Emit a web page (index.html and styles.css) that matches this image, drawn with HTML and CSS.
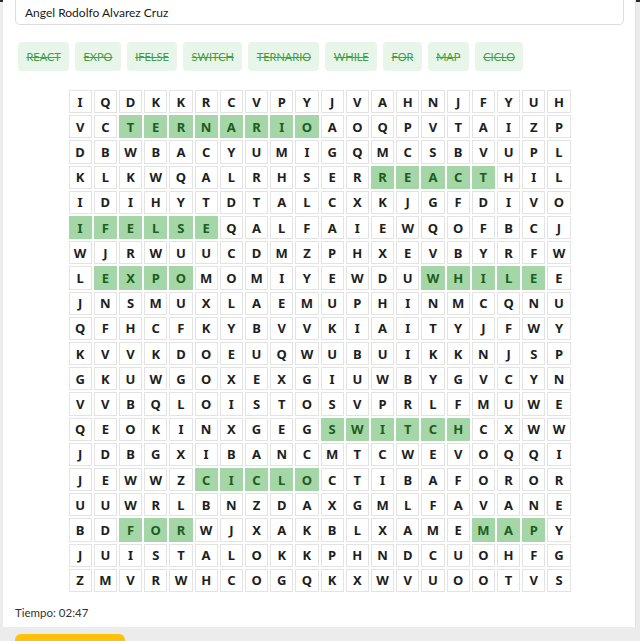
FILE: index.html
```html
<!DOCTYPE html>
<html lang="es">
<head>
<meta charset="utf-8">
<title>Sopa de letras</title>
<link rel="stylesheet" href="styles.css">
</head>
<body>
<div class="topbar"></div>
<div class="page">
  <div class="name-input">Angel Rodolfo Alvarez Cruz</div>
  <div class="words">
    <span class="chip">REACT</span>
    <span class="chip">EXPO</span>
    <span class="chip">IFELSE</span>
    <span class="chip">SWITCH</span>
    <span class="chip">TERNARIO</span>
    <span class="chip">WHILE</span>
    <span class="chip">FOR</span>
    <span class="chip">MAP</span>
    <span class="chip">CICLO</span>
  </div>
  <div class="board">
<span>I</span><span>Q</span><span>D</span><span>K</span><span>K</span><span>R</span><span>C</span><span>V</span><span>P</span><span>Y</span><span>J</span><span>V</span><span>A</span><span>H</span><span>N</span><span>J</span><span>F</span><span>Y</span><span>U</span><span>H</span>
<span>V</span><span>C</span><span class="f">T</span><span class="f">E</span><span class="f">R</span><span class="f">N</span><span class="f">A</span><span class="f">R</span><span class="f">I</span><span class="f">O</span><span>A</span><span>O</span><span>Q</span><span>P</span><span>V</span><span>T</span><span>A</span><span>I</span><span>Z</span><span>P</span>
<span>D</span><span>B</span><span>W</span><span>B</span><span>A</span><span>C</span><span>Y</span><span>U</span><span>M</span><span>I</span><span>G</span><span>Q</span><span>M</span><span>C</span><span>S</span><span>B</span><span>V</span><span>U</span><span>P</span><span>L</span>
<span>K</span><span>L</span><span>K</span><span>W</span><span>Q</span><span>A</span><span>L</span><span>R</span><span>H</span><span>S</span><span>E</span><span>R</span><span class="f">R</span><span class="f">E</span><span class="f">A</span><span class="f">C</span><span class="f">T</span><span>H</span><span>I</span><span>L</span>
<span>I</span><span>D</span><span>I</span><span>H</span><span>Y</span><span>T</span><span>D</span><span>T</span><span>A</span><span>L</span><span>C</span><span>X</span><span>K</span><span>J</span><span>G</span><span>F</span><span>D</span><span>I</span><span>V</span><span>O</span>
<span class="f">I</span><span class="f">F</span><span class="f">E</span><span class="f">L</span><span class="f">S</span><span class="f">E</span><span>Q</span><span>A</span><span>L</span><span>F</span><span>A</span><span>I</span><span>E</span><span>W</span><span>Q</span><span>O</span><span>F</span><span>B</span><span>C</span><span>J</span>
<span>W</span><span>J</span><span>R</span><span>W</span><span>U</span><span>U</span><span>C</span><span>D</span><span>M</span><span>Z</span><span>P</span><span>H</span><span>X</span><span>E</span><span>V</span><span>B</span><span>Y</span><span>R</span><span>F</span><span>W</span>
<span>L</span><span class="f">E</span><span class="f">X</span><span class="f">P</span><span class="f">O</span><span>M</span><span>O</span><span>M</span><span>I</span><span>Y</span><span>E</span><span>W</span><span>D</span><span>U</span><span class="f">W</span><span class="f">H</span><span class="f">I</span><span class="f">L</span><span class="f">E</span><span>E</span>
<span>J</span><span>N</span><span>S</span><span>M</span><span>U</span><span>X</span><span>L</span><span>A</span><span>E</span><span>M</span><span>U</span><span>P</span><span>H</span><span>I</span><span>N</span><span>M</span><span>C</span><span>Q</span><span>N</span><span>U</span>
<span>Q</span><span>F</span><span>H</span><span>C</span><span>F</span><span>K</span><span>Y</span><span>B</span><span>V</span><span>V</span><span>K</span><span>I</span><span>A</span><span>I</span><span>T</span><span>Y</span><span>J</span><span>F</span><span>W</span><span>Y</span>
<span>K</span><span>V</span><span>V</span><span>K</span><span>D</span><span>O</span><span>E</span><span>U</span><span>Q</span><span>W</span><span>U</span><span>B</span><span>U</span><span>I</span><span>K</span><span>K</span><span>N</span><span>J</span><span>S</span><span>P</span>
<span>G</span><span>K</span><span>U</span><span>W</span><span>G</span><span>O</span><span>X</span><span>E</span><span>X</span><span>G</span><span>I</span><span>U</span><span>W</span><span>B</span><span>Y</span><span>G</span><span>V</span><span>C</span><span>Y</span><span>N</span>
<span>V</span><span>V</span><span>B</span><span>Q</span><span>L</span><span>O</span><span>I</span><span>S</span><span>T</span><span>O</span><span>S</span><span>V</span><span>P</span><span>R</span><span>L</span><span>F</span><span>M</span><span>U</span><span>W</span><span>E</span>
<span>Q</span><span>E</span><span>O</span><span>K</span><span>I</span><span>N</span><span>X</span><span>G</span><span>E</span><span>G</span><span class="f">S</span><span class="f">W</span><span class="f">I</span><span class="f">T</span><span class="f">C</span><span class="f">H</span><span>C</span><span>X</span><span>W</span><span>W</span>
<span>J</span><span>D</span><span>B</span><span>G</span><span>X</span><span>I</span><span>B</span><span>A</span><span>N</span><span>C</span><span>M</span><span>T</span><span>C</span><span>W</span><span>E</span><span>V</span><span>O</span><span>Q</span><span>Q</span><span>I</span>
<span>J</span><span>E</span><span>W</span><span>W</span><span>Z</span><span class="f">C</span><span class="f">I</span><span class="f">C</span><span class="f">L</span><span class="f">O</span><span>C</span><span>T</span><span>I</span><span>B</span><span>A</span><span>F</span><span>O</span><span>R</span><span>O</span><span>R</span>
<span>U</span><span>U</span><span>W</span><span>R</span><span>L</span><span>B</span><span>N</span><span>Z</span><span>D</span><span>A</span><span>X</span><span>G</span><span>M</span><span>L</span><span>F</span><span>A</span><span>V</span><span>A</span><span>N</span><span>E</span>
<span>B</span><span>D</span><span class="f">F</span><span class="f">O</span><span class="f">R</span><span>W</span><span>J</span><span>X</span><span>A</span><span>K</span><span>B</span><span>L</span><span>X</span><span>A</span><span>M</span><span>E</span><span class="f">M</span><span class="f">A</span><span class="f">P</span><span>Y</span>
<span>J</span><span>U</span><span>I</span><span>S</span><span>T</span><span>A</span><span>L</span><span>O</span><span>K</span><span>K</span><span>P</span><span>H</span><span>N</span><span>D</span><span>C</span><span>U</span><span>O</span><span>H</span><span>F</span><span>G</span>
<span>Z</span><span>M</span><span>V</span><span>R</span><span>W</span><span>H</span><span>C</span><span>O</span><span>G</span><span>Q</span><span>K</span><span>X</span><span>W</span><span>V</span><span>U</span><span>O</span><span>O</span><span>T</span><span>V</span><span>S</span>
  </div>
  <p class="timer">Tiempo: 02:47</p>
  <div class="btn"></div>
</div>
</body>
</html>
```

FILE: styles.css
```css
html, body {
  margin: 0;
  padding: 0;
}
body {
  background: #ececec;
  font-family: Lato, "Noto Sans", sans-serif;
  color: #222;
  height: 641px;
  overflow: hidden;
}
.topbar {
  height: 2px;
  background: #2a2a2a;
}
.page {
  background: #fff;
  margin: 0 4px 0 3px;
  padding: 0 11px 0 12px;
  height: 639px;
  border-right: 1px solid #e2e2e2;
}
.name-input {
  box-sizing: border-box;
  height: 37px;
  margin-top: -14px;
  padding: 15px 9px 0;
  border: 1px solid #dcdcdc;
  border-radius: 5px;
  font-size: 12px;
  line-height: 18px;
  color: #1a1a1a;
}
.words {
  display: flex;
  flex-wrap: wrap;
  margin-top: 14px;
}
.chip {
  margin: 3px;
  padding: 0 8.4px;
  height: 29px;
  line-height: 29px;
  font-size: 11px;
  background: #e8f5e9;
  color: #43a047;
  text-decoration: line-through;
  border-radius: 4px;
}
.board {
  width: 502px;
  margin: 16px auto 0;
  display: grid;
  grid-template-columns: repeat(20, 1fr);
  gap: 2px;
  font-family: "Noto Sans", sans-serif;
}
.board span {
  box-sizing: border-box;
  aspect-ratio: 1;
  display: flex;
  align-items: center;
  justify-content: center;
  border: 1px solid #e3e3e3;
  font-size: 13px;
  font-weight: 700;
  color: #1e1e1e;
}
.board span.f {
  background: #a5d6a7;
  border-color: #a5d6a7;
  color: #1b5e20;
}
.timer {
  margin: 12px 0 0;
  font-size: 11.5px;
  line-height: 18px;
  color: #333;
}
.btn {
  width: 110px;
  height: 36px;
  margin-top: 12px;
  background: #ffc107;
  border-radius: 6px;
}
```
